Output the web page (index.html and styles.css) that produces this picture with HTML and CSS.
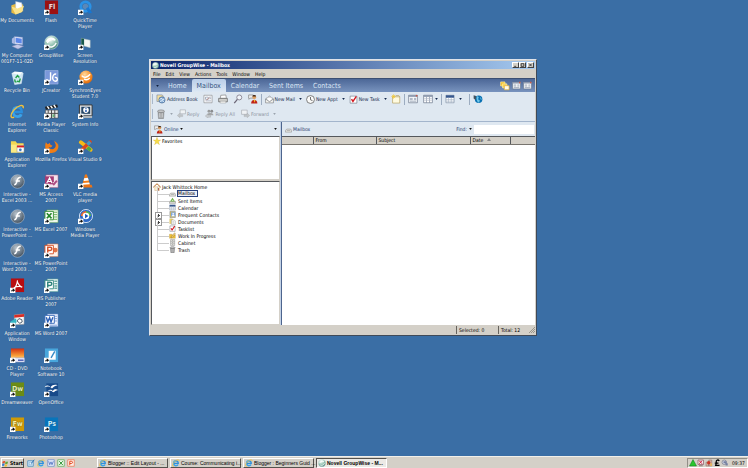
FILE: index.html
```html
<!DOCTYPE html>
<html lang="en">
<head>
<meta charset="utf-8">
<title>Desktop</title>
<link rel="stylesheet" href="styles.css">
</head>
<body>
<svg class="defs" aria-hidden="true">
  <defs>
    <radialGradient id="steel" cx="40%" cy="30%" r="75%"><stop offset="0" stop-color="#b9c3cc"/><stop offset=".6" stop-color="#6d7c8a"/><stop offset="1" stop-color="#3f4c5a"/></radialGradient>
    <radialGradient id="sea" cx="40%" cy="30%" r="75%"><stop offset="0" stop-color="#f2fbf6"/><stop offset=".6" stop-color="#8dbfae"/><stop offset="1" stop-color="#3c7c74"/></radialGradient>
    <radialGradient id="amber" cx="40%" cy="30%" r="75%"><stop offset="0" stop-color="#ffd9a0"/><stop offset=".6" stop-color="#f8912a"/><stop offset="1" stop-color="#d9660c"/></radialGradient>
    <linearGradient id="sunset" x1="0" y1="0" x2="0" y2="1"><stop offset="0" stop-color="#d22f10"/><stop offset=".6" stop-color="#f9a13a"/><stop offset="1" stop-color="#fff0b8"/></linearGradient>
    <symbol id="cut" viewBox="0 0 12 12"><path d="M0 0h12v12H0z" fill="#fff"/><path d="M2 10C2 6 4 5 6 5V2l5 4-5 4V7C4 7 3 8 2 10z" fill="#111"/></symbol>
    <symbol id="ie" viewBox="0 0 32 32"><path d="M16 7c-6 0-9 4-9 10s4 10 9 10c4 0 7-2 8-5" fill="none" stroke="#38a2ea" stroke-width="6"/><path d="M16 7c6 0 9 4 9 10H8" fill="none" stroke="#2b8fdd" stroke-width="5"/><path d="M28 9C31-1 16 3 8 13S0 32 9 28" fill="none" stroke="#f2c13c" stroke-width="3"/></symbol>
    <symbol id="flashball" viewBox="0 0 32 32"><circle cx="16" cy="16" r="14.5" fill="url(#steel)" stroke="#d6dde4"/><path d="M23 7c-8 0-8 7-9 11-1 3-2 5-5 5M12 15h9" fill="none" stroke="#fff" stroke-width="3.4"/></symbol>
    <symbol id="gw" viewBox="0 0 32 32"><circle cx="16" cy="16" r="14.5" fill="url(#sea)" stroke="#e6f0ee"/><path d="M5 14c5-9 14-9 19-3-6-3-14-1-17 6M9 24c6 4 14 0 17-7" fill="none" stroke="#fff" stroke-width="3"/></symbol>
    <symbol id="envelope" viewBox="0 0 32 32"><path d="M2 14 16 4l14 10v14H2z" fill="#f3f3ee" stroke="#6c7078" stroke-width="2"/><path d="M7 9h18v9l-9 5-9-5z" fill="#fff" stroke="#93989f"/><path d="m2 14 14 10 14-10" fill="none" stroke="#6c7078" stroke-width="2"/></symbol>
    <symbol id="people" viewBox="0 0 32 32"><path d="M2 3h15v10H7l-4 4v-4H2z" fill="#eee" stroke="#777" stroke-width="2"/><circle cx="20" cy="10" r="6" fill="#e0a061"/><path d="M14 8c1-6 11-6 12 0z" fill="#3b2417"/><path d="M10 30c0-15 20-15 20 0z" fill="#bf2318"/><path d="m18 19 3 9 3-9z" fill="#f6c433"/></symbol>
    <symbol id="task" viewBox="0 0 32 32"><path d="M4 4h24v25H4z" fill="#fff" stroke="#626a77" stroke-width="2"/><path d="m9 15 5 8L26 5" fill="none" stroke="#d41820" stroke-width="5"/></symbol>
    <symbol id="calendar" viewBox="0 0 32 32"><path d="M3 4h26v24H3z" fill="#fff" stroke="#75879f" stroke-width="2"/><path d="M3 4h26v8H3z" fill="#37588e"/><path d="M3 18h26M3 23h26M11 12v16M20 12v16" stroke="#a4b2c4" stroke-width="2"/></symbol>
    <symbol id="trash" viewBox="0 0 32 32"><path d="M6 8h20l-2 23H8z" fill="#8e8e8e" stroke="#444"/><ellipse cx="16" cy="7" rx="11" ry="4" fill="#c9c9c9" stroke="#555" stroke-width="2"/><path d="M11 13v14M16 14v14M21 13v14" stroke="#ddd" stroke-width="2"/></symbol>
    <symbol id="panel" viewBox="0 0 32 32"><path d="M2 4h28v24H2z" fill="#f8fafc" stroke="#5f6c80" stroke-width="2"/><path d="M2 4h28v5H2z" fill="#8794aa"/><path d="M6 14h9M6 18h9M6 23h20M19 14h7M19 18h7" stroke="#74829a" stroke-width="2"/><path d="M25 3h5v5h-5z" fill="#ca5948"/></symbol>
    <symbol id="inbox" viewBox="0 0 32 32"><path d="m2 20 6-6h18l4 6v8H2z" fill="#e5e5e1" stroke="#777" stroke-width="2"/><path d="M8 20h16" stroke="#999" stroke-width="3"/></symbol>
    <symbol id="caret" viewBox="0 0 4 3"><path d="M0 0h4L2 3z" fill="currentColor"/></symbol>
  </defs>
</svg>

<main class="desktop">
  <nav class="shortcuts" aria-label="Desktop shortcuts">
    <div class="col">
      <a href="#"><svg viewBox="0 0 32 32"><path d="M3 11 13 8l3 3 12-2v15L12 31 3 27z" fill="#e8bb42"/><path d="m12 3 13 3 2 17-15-3z" fill="#fff" stroke="#a9bbd0"/><path d="m3 14 13 4 14-6-5 14-13 5z" fill="#fbe38a"/></svg>My Documents</a>
      <a href="#"><svg viewBox="0 0 32 32"><path d="m9 3 18 2v16L9 19z" fill="#dde4f6" stroke="#6f82be"/><path d="m12 6 13 2v10l-13-2z" fill="#5c86e8"/><path d="m4 8 5-4v15l-5-2z" fill="#aab8e2"/><path d="m4 24 12-4 13 4-12 6z" fill="#c3c8e8" stroke="#8088b4"/></svg>My Computer<br>001F7-11-02D</a>
      <a href="#"><svg viewBox="0 0 32 32"><path d="m4 7 22-2 2 2-4 22-14 2z" fill="#cfe7f3" stroke="#fff"/><path d="m4 7 6-4 16 2-4 5z" fill="#f7fbfd"/><path d="m12 17 4-5 4 4M22 18l-2 7-5-1M10 20l1 5 3 1" fill="none" stroke="#24a04a" stroke-width="3"/></svg>Recycle Bin</a>
      <a href="#"><svg viewBox="0 0 32 32"><use href="#ie"/></svg>Internet<br>Explorer</a>
      <a href="#"><svg viewBox="0 0 32 32"><path d="M2 5h10l3 4h14v20H2z" fill="#f3d852"/><path d="M2 12h27v17H2z" fill="#fbea83"/><path d="M15 14h15v14H15z" fill="#fff" stroke="#888"/><path d="M15 14h15v4H15z" fill="#d82020"/><circle cx="22" cy="23" r="3" fill="#3b7ac2"/></svg>Application<br>Explorer</a>
      <a href="#"><svg viewBox="0 0 32 32"><use href="#flashball"/></svg>Interactive -<br>Excel 2003 ...</a>
      <a href="#"><svg viewBox="0 0 32 32"><use href="#flashball"/></svg>Interactive -<br>PowerPoint ...</a>
      <a href="#"><svg viewBox="0 0 32 32"><use href="#flashball"/></svg>Interactive -<br>Word 2003 ...</a>
      <a href="#"><svg viewBox="0 0 32 32"><path d="M2 1h28v29H2z" fill="#b80d10"/><path d="M16 5c-1 10-4 15-9 20M15 7c3 7 6 11 11 13M8 21c6-3 12-4 18-2" fill="none" stroke="#fff" stroke-width="2.4"/><use href="#cut" y="20" width="12" height="12"/></svg>Adobe Reader</a>
      <a href="#"><svg viewBox="0 0 32 32"><path d="m9 4 21-2v22l-20 1z" fill="#f7f7f7" stroke="#999"/><path d="m9 4 21-2v6L9 10z" fill="#d82d26"/><path d="m15 17 4-5 6 2 1 5-5 3z" fill="#fff" stroke="#456" stroke-width="2"/><path d="m1 18 12-7 1 8-4 8-9 3z" fill="#35b6c4"/><use href="#cut" y="20" width="12" height="12"/></svg>Application<br>Window</a>
      <a href="#"><svg viewBox="0 0 32 32"><path d="M2 1h28v26H2z" fill="url(#sunset)"/><path d="M8 21h23v9H8z" fill="#ecefff" stroke="#8791bd"/><path d="M17 26h12" stroke="#4356b2" stroke-width="3"/><use href="#cut" y="20" width="12" height="12"/></svg>CD - DVD<br>Player</a>
      <a href="#"><svg viewBox="0 0 32 32"><path d="M2 1h28v29H2z" fill="#6c8c14"/><text x="16" y="19" class="logo-text" fill="#e9f2a8">Dw</text><use href="#cut" y="20" width="12" height="12"/></svg>Dreamweaver</a>
      <a href="#"><svg viewBox="0 0 32 32"><path d="M2 1h28v29H2z" fill="#cf9a06"/><text x="16" y="19" class="logo-text" fill="#fff3a0">Fw</text><use href="#cut" y="20" width="12" height="12"/></svg>Fireworks</a>
    </div>
    <div class="col">
      <a href="#"><svg viewBox="0 0 32 32"><path d="M2 1h28v29H2z" fill="#9c1111"/><text x="17" y="20" class="logo-text" fill="#ffd9d2">Fl</text><use href="#cut" y="20" width="12" height="12"/></svg>Flash</a>
      <a href="#"><svg viewBox="0 0 32 32"><use href="#gw"/><use href="#cut" y="20" width="12" height="12"/></svg>GroupWise</a>
      <a href="#"><svg viewBox="0 0 32 32"><path d="M2 1h28v29H2z" fill="#7b98da" stroke="#b6c8f0"/><path d="M14 5v14c0 6-8 5-8 0M26 9c-8-3-11 14-2 15 7 0 5-10-1-8" fill="none" stroke="#fff" stroke-width="3"/><use href="#cut" y="20" width="12" height="12"/></svg>JCreator</a>
      <a href="#"><svg viewBox="0 0 32 32"><path d="M3 13h27v17H3z" fill="#e9e9e9" stroke="#333"/><path d="m2 6 26-5 2 6L4 12z" fill="#222"/><path d="m7 5 4 5M14 4l4 5M21 2l4 6" stroke="#fff" stroke-width="3"/><path d="M9 13v17M16 13v17M23 13v17M3 20h27" stroke="#444" stroke-width="2"/><path d="M18 22h4v6h-4z" fill="#69b47c"/><use href="#cut" y="20" width="12" height="12"/></svg>Media Player<br>Classic</a>
      <a href="#"><svg viewBox="0 0 32 32"><circle cx="16" cy="15" r="13" fill="#2e5fa8"/><path d="M29 8c6 14-5 23-14 22C4 29 0 18 4 7l4 4 5-3c-1 4 2 5 5 6-2 6-6 4-8 3 3 7 14 6 15-2 0-4-1-7-4-10 4 0 7 3 8 7z" fill="#f07d16"/><use href="#cut" y="20" width="12" height="12"/></svg>Mozilla Firefox</a>
      <a href="#"><svg viewBox="0 0 32 32"><path d="M4 2h26v27H4z" fill="#f5e5ee" stroke="#a04c79"/><path d="M2 5h19v17H2z" fill="#a53c76"/><path d="m6 19 6-11 5 11M9 16h6M19 19h8" fill="none" stroke="#fff" stroke-width="2.5"/><path d="m18 22 8-9 3 3-8 9z" fill="#ad4b82"/><use href="#cut" y="20" width="12" height="12"/></svg>MS Access<br>2007</a>
      <a href="#"><svg viewBox="0 0 32 32"><path d="M6 2h24v27H6z" fill="#eef8e8" stroke="#529d45"/><path d="M21 7h7M21 12h7M21 17h7M21 22h7" stroke="#6aae59" stroke-width="2"/><path d="M2 5h18v18H2z" fill="#fff" stroke="#328c32" stroke-width="2"/><path d="m6 9 10 11M16 9 6 20" stroke="#268729" stroke-width="3.5"/><use href="#cut" y="20" width="12" height="12"/></svg>MS Excel 2007</a>
      <a href="#"><svg viewBox="0 0 32 32"><path d="M7 2h23v27H7z" fill="#fff2ea" stroke="#d26439"/><circle cx="24" cy="15" r="5" fill="#e27448"/><path d="M2 5h18v18H2z" fill="#fff" stroke="#d5522a" stroke-width="2"/><path d="M8 21V9h5c5 0 5 7 0 7H8" fill="none" stroke="#d5522a" stroke-width="3"/><use href="#cut" y="20" width="12" height="12"/></svg>MS PowerPoint<br>2007</a>
      <a href="#"><svg viewBox="0 0 32 32"><path d="M7 2h23v27H7z" fill="#edf7f5" stroke="#4a9890"/><path d="M22 7h6M22 12h6M22 17h6M22 22h6" stroke="#6eaaa3" stroke-width="3"/><path d="M2 5h18v18H2z" fill="#fff" stroke="#378b83" stroke-width="2"/><path d="M8 21V9h5c5 0 5 7 0 7H8" fill="none" stroke="#2c827c" stroke-width="3"/><use href="#cut" y="20" width="12" height="12"/></svg>MS Publisher<br>2007</a>
      <a href="#"><svg viewBox="0 0 32 32"><path d="M7 2h23v27H7z" fill="#edf3ff" stroke="#4e73ba"/><path d="M22 7h6M22 12h6M22 17h6M12 26h16" stroke="#7d9ed8" stroke-width="2"/><path d="M2 5h20v17H2z" fill="#fff" stroke="#3969b8" stroke-width="2"/><path d="m5 9 3 10 4-9 3 9 4-10" fill="none" stroke="#2c5fb6" stroke-width="3"/><use href="#cut" y="20" width="12" height="12"/></svg>MS Word 2007</a>
      <a href="#"><svg viewBox="0 0 32 32"><path d="M2 1h28v29H2z" fill="#48a6dc"/><path d="M10 6h15v19H10z" fill="#fff"/><path d="m15 21 8-14" stroke="#378bc7" stroke-width="3"/><use href="#cut" y="20" width="12" height="12"/></svg>Notebook<br>Software 10</a>
      <a href="#"><svg viewBox="0 0 32 32"><path d="M5 3h25v27H5z" fill="#174a8a"/><path d="M1 11c7-6 10-3 13 0 4-5 9-6 15-4-6 1-9 4-12 7-5-5-9-5-16-3zM8 19c6-4 8-2 11 0 3-4 7-4 11-2-5 1-7 3-10 5-4-4-7-4-12-3z" fill="#fff"/><use href="#cut" y="20" width="12" height="12"/></svg>OpenOffice</a>
      <a href="#"><svg viewBox="0 0 32 32"><path d="M2 1h28v29H2z" fill="#0875bb"/><text x="17" y="20" class="logo-text" fill="#c9efff">Ps</text><use href="#cut" y="20" width="12" height="12"/></svg>Photoshop</a>
    </div>
    <div class="col">
      <a href="#"><svg viewBox="0 0 32 32"><circle cx="16" cy="14" r="10" fill="none" stroke="#2a92e6" stroke-width="6"/><circle cx="16" cy="14" r="6" fill="#5a88b8"/><path d="m17 18 5-3 8 12-7 2z" fill="#1877d2"/><use href="#cut" y="20" width="12" height="12"/></svg>QuickTime<br>Player</a>
      <a href="#"><svg viewBox="0 0 32 32"><path d="m7 7 19 4v16L7 22z" fill="#f5f7f4" stroke="#a8b8bb"/><path d="m7 7 6 1v15l-6-1z" fill="#19594b"/><use href="#cut" y="20" width="12" height="12"/></svg>Screen<br>Resolution</a>
      <a href="#"><svg viewBox="0 0 32 32"><circle cx="17" cy="15" r="14" fill="url(#amber)"/><path d="M8 12c5 6 12 4 18-3M13 19c4 3 8 2 12-2" fill="none" stroke="#fff" stroke-width="3"/><use href="#cut" y="20" width="12" height="12"/></svg>SynchronEyes<br>Student 7.0</a>
      <a href="#"><svg viewBox="0 0 32 32"><path d="M3 2h27v23H3z" fill="#d9dde1" stroke="#333" stroke-width="2"/><path d="M7 6h19v15H7z" fill="#274768"/><circle cx="17" cy="13" r="6" fill="#fff"/><path d="M17 8v2M17 12v5" stroke="#174fac" stroke-width="3"/><path d="M12 25h18v5H12z" fill="#aeb4ba"/><use href="#cut" y="20" width="12" height="12"/></svg>System Info</a>
      <a href="#"><svg viewBox="0 0 32 32"><path d="M6 7 27 23" stroke="#f4bb18" stroke-width="8" stroke-linecap="round"/><path d="M26 6 9 22" stroke="#d84820" stroke-width="7" stroke-linecap="round"/><path d="m20 12 6-6" stroke="#3a9ccf" stroke-width="7"/><path d="m20 18 7 6" stroke="#4ca941" stroke-width="7"/><use href="#cut" y="20" width="12" height="12"/></svg>Visual Studio 9</a>
      <a href="#"><svg viewBox="0 0 32 32"><path d="M15 1h4l7 23H9z" fill="#f27b16"/><path d="m13 9 8-1 2 6-11 1zM10 19l14-1 1 4-16 1z" fill="#fff"/><path d="m4 24 25-1 2 6H3z" fill="#ed7314"/><use href="#cut" y="20" width="12" height="12"/></svg>VLC media<br>player</a>
      <a href="#"><svg viewBox="0 0 32 32"><circle cx="17" cy="15" r="14" fill="#2d68c5" stroke="#d9e5f5" stroke-width="2"/><path d="M17 4a11 11 0 0 1 11 11H17z" fill="#57b24b"/><path d="M17 4A11 11 0 0 0 6 15h11z" fill="#e76a2d"/><circle cx="17" cy="15" r="7" fill="#fff"/><path d="m15 10 7 5-7 5z" fill="#1556b7"/><use href="#cut" y="20" width="12" height="12"/></svg>Windows<br>Media Player</a>
    </div>
  </nav>

  <section class="window" aria-label="Novell GroupWise - Mailbox">
    <header class="titlebar">
      <svg class="i7" viewBox="0 0 32 32"><use href="#gw"/></svg>
      <h1>Novell GroupWise - Mailbox</h1>
      <div class="winbtns">
        <button aria-label="Minimize"><svg viewBox="0 0 6 6"><path d="M1 5h3" stroke="#000"/></svg></button>
        <button aria-label="Restore"><svg viewBox="0 0 6 6"><path d="M1 1h4v4H1z" fill="none" stroke="#000"/></svg></button>
        <button class="close" aria-label="Close"><svg viewBox="0 0 6 6"><path d="m1 1 4 4M5 1 1 5" stroke="#000"/></svg></button>
      </div>
    </header>
    <nav class="menubar" aria-label="Menu">
      <button>File</button><button>Edit</button><button>View</button><button>Actions</button><button>Tools</button><button>Window</button><button>Help</button>
    </nav>
    <nav class="tabs" aria-label="Folders">
      <button class="tabmenu" aria-label="Tab options"><svg class="caret"><use href="#caret"/></svg></button>
      <button>Home</button><button class="active">Mailbox</button><button>Calendar</button><button>Sent Items</button><button>Contacts</button>
      <div class="tabtools">
        <svg class="i10" viewBox="0 0 32 32"><path d="M2 3h14v13H2z" fill="#f2c02c" stroke="#fff0a5" stroke-width="2"/><path d="M8 9h14v13H8z" fill="#f8d255" stroke="#fff0a5" stroke-width="2"/><path d="M14 15h15v13H14z" fill="#fffbea" stroke="#e6ad25" stroke-width="2"/></svg>
        <svg class="i9" viewBox="0 0 32 32"><use href="#panel"/></svg>
        <svg class="i9" viewBox="0 0 32 32"><use href="#panel"/></svg>
      </div>
    </nav>

    <div class="toolbars">
      <div class="toolbar">
        <i class="grip"></i>
        <button><svg class="i10" viewBox="0 0 32 32"><path d="M3 3h17l3 4v17H3z" fill="#f5df9c" stroke="#78869e" stroke-width="2"/><circle cx="19" cy="19" r="10" fill="#85abd5" stroke="#42658f" stroke-width="2"/><path d="m12 18 5-5 4 5 6-2M13 24l7-3 5 4" fill="none" stroke="#e9f3fc" stroke-width="3"/></svg>Address Book</button>
        <button class="tool" aria-label="Properties"><svg class="i10" viewBox="0 0 32 32"><path d="M3 4h26v24H3z" fill="#fff" stroke="#85878c" stroke-width="2"/><path d="M8 10h9v7H8zM20 10h6M20 15h6M8 22h18" fill="none" stroke="#7c8aa2" stroke-width="2"/><path d="m11 20 9-9" stroke="#bb6c5d" stroke-width="2"/></svg></button>
        <button class="tool" aria-label="Print"><svg class="i10" viewBox="0 0 32 32"><path d="m9 4 16-1 2 11H7z" fill="#fff" stroke="#777" stroke-width="2"/><path d="M2 14h28v11H2z" fill="#cfcfcc" stroke="#555" stroke-width="2"/><path d="M7 23h18v6H7z" fill="#f5f5f3" stroke="#777"/></svg></button>
        <button class="tool" aria-label="Find"><svg class="i10" viewBox="0 0 32 32"><circle cx="20" cy="11" r="8" fill="#f1f5fa" stroke="#8a8593" stroke-width="3"/><path d="M14 17 4 29" stroke="#6b6575" stroke-width="4"/></svg></button>
        <button class="tool" aria-label="Messenger"><svg class="i10" viewBox="0 0 32 32"><use href="#people"/></svg></button>
        <i class="sep"></i>
        <button><svg class="i9" viewBox="0 0 32 32"><use href="#envelope"/></svg>New Mail</button>
        <button class="drop" aria-label="New mail options"><svg class="caret"><use href="#caret"/></svg></button>
        <button><svg class="i9" viewBox="0 0 32 32"><circle cx="16" cy="16" r="14" fill="#fbfbfa" stroke="#696969" stroke-width="3"/><path d="M16 7v10l7 3" fill="none" stroke="#555" stroke-width="3"/></svg>New Appt</button>
        <button class="drop" aria-label="New appointment options"><svg class="caret"><use href="#caret"/></svg></button>
        <button><svg class="i9" viewBox="0 0 32 32"><use href="#task"/></svg>New Task</button>
        <button class="drop" aria-label="New task options"><svg class="caret"><use href="#caret"/></svg></button>
        <button aria-label="New folder"><svg class="i10" viewBox="0 0 32 32"><path d="M5 9h23v20H5z" fill="#fffbe0" stroke="#b29b55" stroke-width="2"/><path d="M15 5h10l3 4" fill="none" stroke="#b29b55" stroke-width="2"/><path d="M8 1v14M1 8h14M3 3l10 10M13 3 3 13" stroke="#f0c62d" stroke-width="2"/></svg></button>
        <i class="sep"></i>
        <button aria-label="Details"><svg class="i10" viewBox="0 0 32 32"><use href="#panel"/></svg></button>
        <button class="tool" aria-label="Columns"><svg class="i10" viewBox="0 0 32 32"><path d="M2 4h28v24H2z" fill="#fff" stroke="#5f6c80" stroke-width="2"/><path d="M2 4h28v5H2z" fill="#8794aa"/><path d="M11 9v19M21 9v19M5 14h3M5 20h3M14 14h4M14 20h4M24 14h3M24 20h3" stroke="#74829a" stroke-width="2"/></svg></button>
        <button class="near" aria-label="Column options"><svg class="caret"><use href="#caret"/></svg></button>
        <i class="sep"></i>
        <button aria-label="Calendar view"><svg class="i10" viewBox="0 0 32 32"><use href="#calendar"/></svg></button>
        <button class="drop" aria-label="Display options"><svg class="caret"><use href="#caret"/></svg></button>
        <i class="sep"></i>
        <button aria-label="Web"><svg class="i10" viewBox="0 0 32 32"><circle cx="18" cy="17" r="12" fill="#0870b2"/><path d="M14 7c7 2 4 8 1 9l7 5-3 7c-6-3-9-10-7-21zM23 9l6 9-5-1z" fill="#6fc5e6"/><path d="m2 4 8 2-1 13-7-5z" fill="#3f5362"/></svg></button>
      </div>
      <div class="toolbar disabled">
        <i class="grip"></i>
        <button disabled aria-label="Delete"><svg class="i10" viewBox="0 0 32 32"><use href="#trash"/></svg></button>
        <button class="drop" disabled aria-label="Delete options"><svg class="caret"><use href="#caret"/></svg></button>
        <button class="reply" disabled><svg class="i9" viewBox="0 0 32 32"><path d="M11 3h19v14H11z" fill="#f4f5f6" stroke="#8e9297" stroke-width="2"/><path d="m1 23 9-8v5h10v7H10v4z" fill="#babdbf" stroke="#888"/></svg>Reply</button>
        <button class="reply" disabled><svg class="i9" viewBox="0 0 32 32"><circle cx="14" cy="8" r="5" fill="#888"/><circle cx="24" cy="8" r="5" fill="#777"/><path d="M7 22c0-12 23-12 23 0z" fill="#999"/><path d="m1 25 9-8v5h10v7H10v3z" fill="#c5c7c9" stroke="#777"/></svg>Reply All</button>
        <button class="reply" disabled><svg class="i9" viewBox="0 0 32 32"><path d="M2 4h20v15H2z" fill="#f4f5f6" stroke="#8e9297" stroke-width="2"/><path d="m31 23-9-8v5H11v7h11v4z" fill="#babdbf" stroke="#888"/></svg>Forward</button>
        <button class="drop" disabled aria-label="Forward options"><svg class="caret"><use href="#caret"/></svg></button>
      </div>
    </div>

    <div class="body">
      <aside class="side">
        <div class="bar">
          <button><svg class="i9" viewBox="0 0 32 32"><use href="#people"/></svg>Online<svg class="caret"><use href="#caret"/></svg></button>
          <button class="end" aria-label="Folder list options"><svg class="caret"><use href="#caret"/></svg></button>
        </div>
        <div class="favorites"><svg class="i8" viewBox="0 0 32 32"><path d="m16 1 4 11h11l-9 7 4 12-10-7-10 7 4-12-9-7h11z" fill="#f7dc48" stroke="#caa735"/></svg>Favorites</div>
        <ul class="tree">
          <li class="root"><svg class="i8" viewBox="0 0 32 32"><path d="M7 15h19v15H7z" fill="#fff3cf" stroke="#9c6a36"/><path d="M1 17 16 3l15 14" fill="none" stroke="#b56a22" stroke-width="4"/><path d="M17 20h6v10h-6z" fill="#a23b20"/></svg>Jack Whittock Home</li>
          <li><svg class="i7" viewBox="0 0 32 32"><use href="#inbox"/></svg><span class="selected">Mailbox</span></li>
          <li><svg class="i7" viewBox="0 0 32 32"><path d="M2 20h28v9H2z" fill="#d8d8d5" stroke="#777" stroke-width="2"/><path d="M5 20 16 3l11 17z" fill="#61aa3d"/><path d="m11 18 5-7 6 7z" fill="#cdecb8"/></svg>Sent Items</li>
          <li><svg class="i7" viewBox="0 0 32 32"><use href="#calendar"/></svg>Calendar</li>
          <li class="expand"><svg class="i7" viewBox="0 0 32 32"><path d="M4 2h25v28H4z" fill="#dcc260" stroke="#67728a" stroke-width="2"/><path d="M9 6h20v19H9z" fill="#7fa6dd"/><circle cx="19" cy="13" r="4" fill="#fff"/><path d="M12 24c0-8 14-8 14 0z" fill="#fff"/></svg>Frequent Contacts</li>
          <li class="expand"><svg class="i7" viewBox="0 0 32 32"><path d="M3 3h12l3 4v19H3z" fill="#f1d66c" stroke="#a99446"/><path d="M11 9h13l5 5v16H11z" fill="#fff" stroke="#888" stroke-width="2"/><path d="M15 16h9M15 21h9M15 26h9" stroke="#aaa" stroke-width="2"/></svg>Documents</li>
          <li><svg class="i7" viewBox="0 0 32 32"><use href="#task"/></svg>Tasklist</li>
          <li><svg class="i7" viewBox="0 0 32 32"><path d="M2 10h11l3 4h13v15H2z" fill="#edbf37" stroke="#9a761f"/><path d="m10 22 15-18 5 4-15 17-6 2z" fill="#f6dd72" stroke="#8e6230" stroke-width="2"/></svg>Work In Progress</li>
          <li><svg class="i7" viewBox="0 0 32 32"><path d="M7 2h19v28H7z" fill="#deded9" stroke="#888" stroke-width="2"/><path d="M7 11h19M7 20h19" stroke="#999" stroke-width="2"/><path d="M14 7h5M14 16h5M14 25h5" stroke="#777" stroke-width="2"/></svg>Cabinet</li>
          <li><svg class="i7" viewBox="0 0 32 32"><use href="#trash"/></svg>Trash</li>
        </ul>
      </aside>
      <section class="content">
        <div class="bar">
          <span class="place"><svg class="i7" viewBox="0 0 32 32"><use href="#inbox"/></svg>Mailbox</span>
          <label class="end" for="find">Find: <svg class="caret"><use href="#caret"/></svg></label>
          <input id="find" type="text">
        </div>
        <div class="list">
          <table>
            <colgroup><col class="c-icon"><col class="c-from"><col class="c-subject"><col class="c-date"><col class="c-rest"></colgroup>
            <thead><tr><th></th><th>From</th><th>Subject</th><th>Date <svg class="sort" viewBox="0 0 4 3"><path d="M0 3h4L2 0z"/></svg></th><th></th></tr></thead>
          </table>
        </div>
      </section>
    </div>
    <footer class="status"><span class="cell">Selected: 0</span><span class="cell">Total: 12</span><svg class="i7" viewBox="0 0 7 7"><path d="M1 7l6-6M3 7l4-4M5 7l2-2" stroke="#9a968c"/></svg></footer>
  </section>
</main>

<footer class="taskbar">
  <button class="start"><svg class="i7" viewBox="0 0 32 32"><path d="M3 7c4-3 8-3 11-1l-2 10c-3-2-7-2-11 0z" fill="#e2502c"/><path d="M16 7c4 2 8 2 12 0l-3 10c-3 2-7 2-11 0z" fill="#65a53a"/><path d="M1 18c4-2 8-2 11 0l-3 10c-3-2-6-2-10 0z" fill="#397bd0"/><path d="M14 19c4 2 7 2 11 0l-3 10c-3 2-7 2-11 0z" fill="#f3bf2b"/></svg>Start</button>
  <nav class="quick" aria-label="Quick launch">
    <a href="#" aria-label="Show desktop"><svg class="i8" viewBox="0 0 32 32"><path d="M3 7h22v22H3z" fill="#dceefa" stroke="#3d87bd" stroke-width="3"/><path d="M9 13h10v10H9z" fill="#fff" stroke="#4c92c6" stroke-width="2"/><path d="m17 18 12-15" stroke="#286fb1" stroke-width="4"/></svg></a>
    <a href="#" aria-label="Internet Explorer"><svg class="i8" viewBox="0 0 32 32"><use href="#ie"/></svg></a>
    <a href="#" aria-label="Word"><svg class="i8" viewBox="0 0 32 32"><path d="M3 3h26v26H3z" fill="#edf3ff" stroke="#6a87c9" stroke-width="3"/><path d="m7 9 4 14 5-12 4 12 5-14" fill="none" stroke="#3c62b7" stroke-width="3"/></svg></a>
    <a href="#" aria-label="Excel"><svg class="i8" viewBox="0 0 32 32"><path d="M3 3h26v26H3z" fill="#effaea" stroke="#5dac5a" stroke-width="3"/><path d="m9 9 14 15M23 9 9 24" stroke="#2b9134" stroke-width="4"/></svg></a>
    <a href="#" aria-label="PowerPoint"><svg class="i8" viewBox="0 0 32 32"><path d="M3 3h26v26H3z" fill="#fff0e9" stroke="#ee7654" stroke-width="3"/><path d="M11 25V9h6c7 0 7 9 0 9h-6" fill="none" stroke="#e34d25" stroke-width="4"/></svg></a>
  </nav>
  <nav class="tasks" aria-label="Open windows">
    <button><svg class="i8" viewBox="0 0 32 32"><use href="#ie"/></svg>Blogger :: Edit Layout - ...</button>
    <button><svg class="i8" viewBox="0 0 32 32"><use href="#ie"/></svg>Course: Communicating i...</button>
    <button><svg class="i8" viewBox="0 0 32 32"><use href="#ie"/></svg>Blogger : Beginners Guid ...</button>
    <button class="current"><svg class="i8" viewBox="0 0 32 32"><use href="#gw"/></svg>Novell GroupWise - M...</button>
  </nav>
  <div class="tray">
    <svg class="i8" viewBox="0 0 32 32"><path d="m16 2 14 26H2z" fill="#28c52e" stroke="#087a18" stroke-width="2"/></svg>
    <svg class="i8" viewBox="0 0 32 32"><path d="M4 4h22v18H4z" fill="#f4e8eb" stroke="#94606c" stroke-width="3"/><path d="m9 7 11 12M20 7 9 19" stroke="#d12446" stroke-width="4"/><path d="M8 27h15" stroke="#755" stroke-width="3"/></svg>
    <svg class="i8" viewBox="0 0 32 32"><path d="M4 13h11v15H4zM15 4h12v24H15z" fill="#d4b5a4" stroke="#866" stroke-width="2"/><circle cx="15" cy="15" r="7" fill="#cb3425"/><path d="M21 17h7v11h-7z" fill="#e8b55b"/></svg>
    <svg class="i8" viewBox="0 0 32 32"><path d="M25 8C21 1 12 4 13 12c1 7 0 12-5 14 6-3 11 3 18-2M7 16h15" fill="none" stroke="#000" stroke-width="5"/></svg>
    <svg class="i8" viewBox="0 0 32 32"><circle cx="13" cy="13" r="9" fill="#d5d9e5" stroke="#777d8d" stroke-width="3"/><path d="M10 9h12v8H10zM18 17h9v9h-9z" fill="#7480a2"/></svg>
    <time>09:37</time>
  </div>
</footer>
</body>
</html>
```
FILE: styles.css
```css
* { box-sizing: border-box; }

html, body { height: 100%; }

body {
  margin: 0;
  display: flex;
  flex-direction: column;
  overflow: hidden;
  background: #3a6ea5;
  color: #000;
  font-family: "DejaVu Sans Condensed", "DejaVu Sans", sans-serif;
  font-size: 5px;
  line-height: 6px;
  white-space: nowrap;
}

button, input {
  font: inherit;
  color: inherit;
  border: 0;
  padding: 0;
  margin: 0;
  background: none;
}

svg { display: block; flex: none; }
.defs { position: absolute; width: 0; height: 0; }
.i7 { width: 7px; height: 7px; }
.i8 { width: 8px; height: 8px; }
.i9 { width: 9px; height: 9px; }
.i10 { width: 10px; height: 10px; }
.caret { width: 3px; height: 2px; }
.logo-text { font-size: 15px; font-weight: bold; text-anchor: middle; }

/* Desktop */
.desktop { position: relative; flex: 1; min-height: 0; }

.shortcuts { display: flex; height: 100%; padding-bottom: 4px; }

.col {
  width: 34px;
  display: grid;
  grid-template-rows: repeat(13, 1fr);
}

.col a {
  display: block;
  min-height: 0;
  margin: 0 -4px;
  text-align: center;
  color: #fff;
  text-decoration: none;
  text-shadow: 0 0 1px #1d3f68;
}

.col svg { width: 15px; height: 15px; margin: 0 auto 2px; }

/* Application window */
.window {
  position: absolute;
  left: 149px;
  right: 211px;
  top: 59px;
  bottom: 120px;
  display: flex;
  flex-direction: column;
  padding: 1px;
  background: #d4d0c8;
  border: 1px solid #dfe3ea;
  border-right-color: #404a58;
  border-bottom-color: #404a58;
}

.titlebar {
  display: flex;
  align-items: center;
  gap: 1px;
  height: 8px;
  padding: 0 1px;
  background: linear-gradient(90deg, #0a246a, #a6caf0);
}

.titlebar h1 { margin: 0; flex: 1; font-size: 5px; color: #fff; }
.winbtns { display: flex; }

.winbtns button {
  width: 7px;
  height: 6px;
  background: #d4d0c8;
  border: 1px solid #fff;
  border-right-color: #404040;
  border-bottom-color: #404040;
}

.winbtns .close { margin-left: 1px; }
.winbtns svg { width: 5px; height: 4px; }

.menubar { display: flex; align-items: center; gap: 5px; height: 9px; padding: 0 2px; }

.tabs {
  display: flex;
  align-items: stretch;
  height: 14px;
  border-top: 1px solid #3c4f73;
  background: linear-gradient(#4c6797, #7893be);
  color: #d9e5f5;
  font-size: 7px;
  line-height: 10px;
}

.tabs button { padding: 0 5px; }
.tabs .tabmenu { width: 12px; padding: 0 5px; color: #10203c; }

.tabs .active {
  background: linear-gradient(#b8cde8, #dde8f4);
  color: #33527f;
  border-radius: 2px 2px 0 0;
}

.tabtools { display: flex; align-items: center; gap: 2px; margin-left: auto; padding-right: 3px; }

.toolbars { background: #dfe8f1; border-bottom: 1px solid #a3b5cc; }

.toolbar { display: flex; align-items: center; height: 14px; padding: 0 1px; color: #14284c; }
.toolbar.disabled { height: 15px; color: #8b939e; }
.toolbar button { display: flex; align-items: center; gap: 1px; }
.toolbar .tool { margin-left: 5px; }
.toolbar .drop { width: 11px; justify-content: center; }
.toolbar .near { margin-left: 2px; }
.toolbar .reply + .reply { margin-left: 6px; }
.disabled svg { opacity: .8; }
.grip { width: 1px; height: 10px; margin-right: 3px; background: #a9b8ca; }
.sep { width: 1px; height: 11px; margin: 0 3px; background: #9cacc0; }

.body { flex: 1; min-height: 0; display: flex; gap: 1px; background: #c3d2e6; }
.side { width: 129px; display: flex; flex-direction: column; }
.content { flex: 1; display: flex; flex-direction: column; border-left: 1px solid #4d658e; }

.bar {
  display: flex;
  align-items: center;
  flex: none;
  height: 14px;
  padding: 0 3px;
  background: #dfe8f1;
  color: #1f3a6e;
}

.bar button, .bar label, .place { display: flex; align-items: center; gap: 1px; }
.bar .caret { color: #111; }
.bar .end { margin-left: auto; }
.bar label { gap: 2px; }
.bar input { width: 60px; height: 9px; margin-left: 2px; background: #fff; }
.content .bar { padding-right: 1px; }

.favorites {
  display: flex;
  align-items: flex-start;
  flex: none;
  gap: 1px;
  height: 45px;
  padding: 0 1px;
  line-height: 8px;
  background: #fff;
  border: 1px solid #55585c;
  border-right-color: #d4d0c8;
  border-bottom: 2px solid #d4d0c8;
}

.tree {
  flex: 1;
  display: grid;
  grid-auto-rows: 7px;
  align-content: start;
  margin: 0;
  padding: 1px;
  list-style: none;
  background: #fff;
  border: 1px solid #55585c;
  border-bottom-color: #d4d0c8;
  border-right-color: #d4d0c8;
}

.tree li {
  position: relative;
  display: flex;
  align-items: center;
  gap: 2px;
  padding-left: 16px;
}

.tree .root { padding-left: 0; gap: 1px; }

.tree li:not(.root)::before {
  content: "";
  position: absolute;
  left: 4px;
  top: -3px;
  width: 11px;
  height: 7px;
  border-left: 1px solid #ccc;
  border-bottom: 1px solid #ccc;
}

.tree .expand::after {
  content: "";
  position: absolute;
  left: 2px;
  top: 1px;
  width: 5px;
  height: 5px;
  background:
    linear-gradient(#444, #444) center / 3px 1px no-repeat,
    linear-gradient(#444, #444) center / 1px 3px no-repeat,
    #fff;
  border: 1px solid #999;
}

.selected { margin-left: -1px; padding-right: 2px; border: 1px solid #27407d; line-height: 5px; background: #eef1f8; }

.list { flex: 1; background: #fff; border-top: 1px solid #55585c; }
table { width: 100%; table-layout: fixed; border-collapse: collapse; }
.c-icon { width: 31px; }
.c-from { width: 63px; }
.c-subject { width: 94px; }
.c-date { width: 40px; }

th {
  height: 7px;
  padding: 0 2px;
  text-align: left;
  font-weight: normal;
  line-height: 6px;
  background: #d4d0c8;
  border-right: 1px solid #55585c;
  border-bottom: 1px solid #77746e;
}

th:last-child { border-right: 0; }
.sort { display: inline-block; width: 4px; height: 3px; margin-left: 2px; fill: #888; vertical-align: 1px; }

.status { display: flex; align-items: center; justify-content: flex-end; height: 9px; }
.cell { min-width: 42px; padding-left: 2px; line-height: 8px; border-left: 1px solid #66635d; }
.cell + .cell { min-width: 30px; }

/* Taskbar */
.taskbar {
  display: flex;
  align-items: center;
  height: 12px;
  padding: 1px 0 0 1px;
  background: #d4d0c8;
  border-top: 1px solid #f1efea;
}

.taskbar button {
  display: flex;
  align-items: center;
  gap: 1px;
  height: 10px;
  border: 1px solid #fff;
  border-right-color: #55524d;
  border-bottom-color: #55524d;
}

.start { width: 23px; font-weight: bold; }
.quick { display: flex; gap: 2px; margin-left: 3px; }
.tasks { display: flex; flex: 1; gap: 2px; margin-left: 22px; font-family: "Liberation Sans", sans-serif; }
.tasks button { width: 71px; padding-left: 1px; }

.tasks .current {
  font-weight: bold;
  background: #eceae6;
  border-color: #55524d #fff #fff #55524d;
}

.tray {
  display: flex;
  align-items: center;
  height: 10px;
  width: 61px;
  padding-left: 1px;
  border: 1px solid #918e87;
  border-right-color: #fff;
  border-bottom-color: #fff;
}

.tray time { margin-left: 3px; }
```
